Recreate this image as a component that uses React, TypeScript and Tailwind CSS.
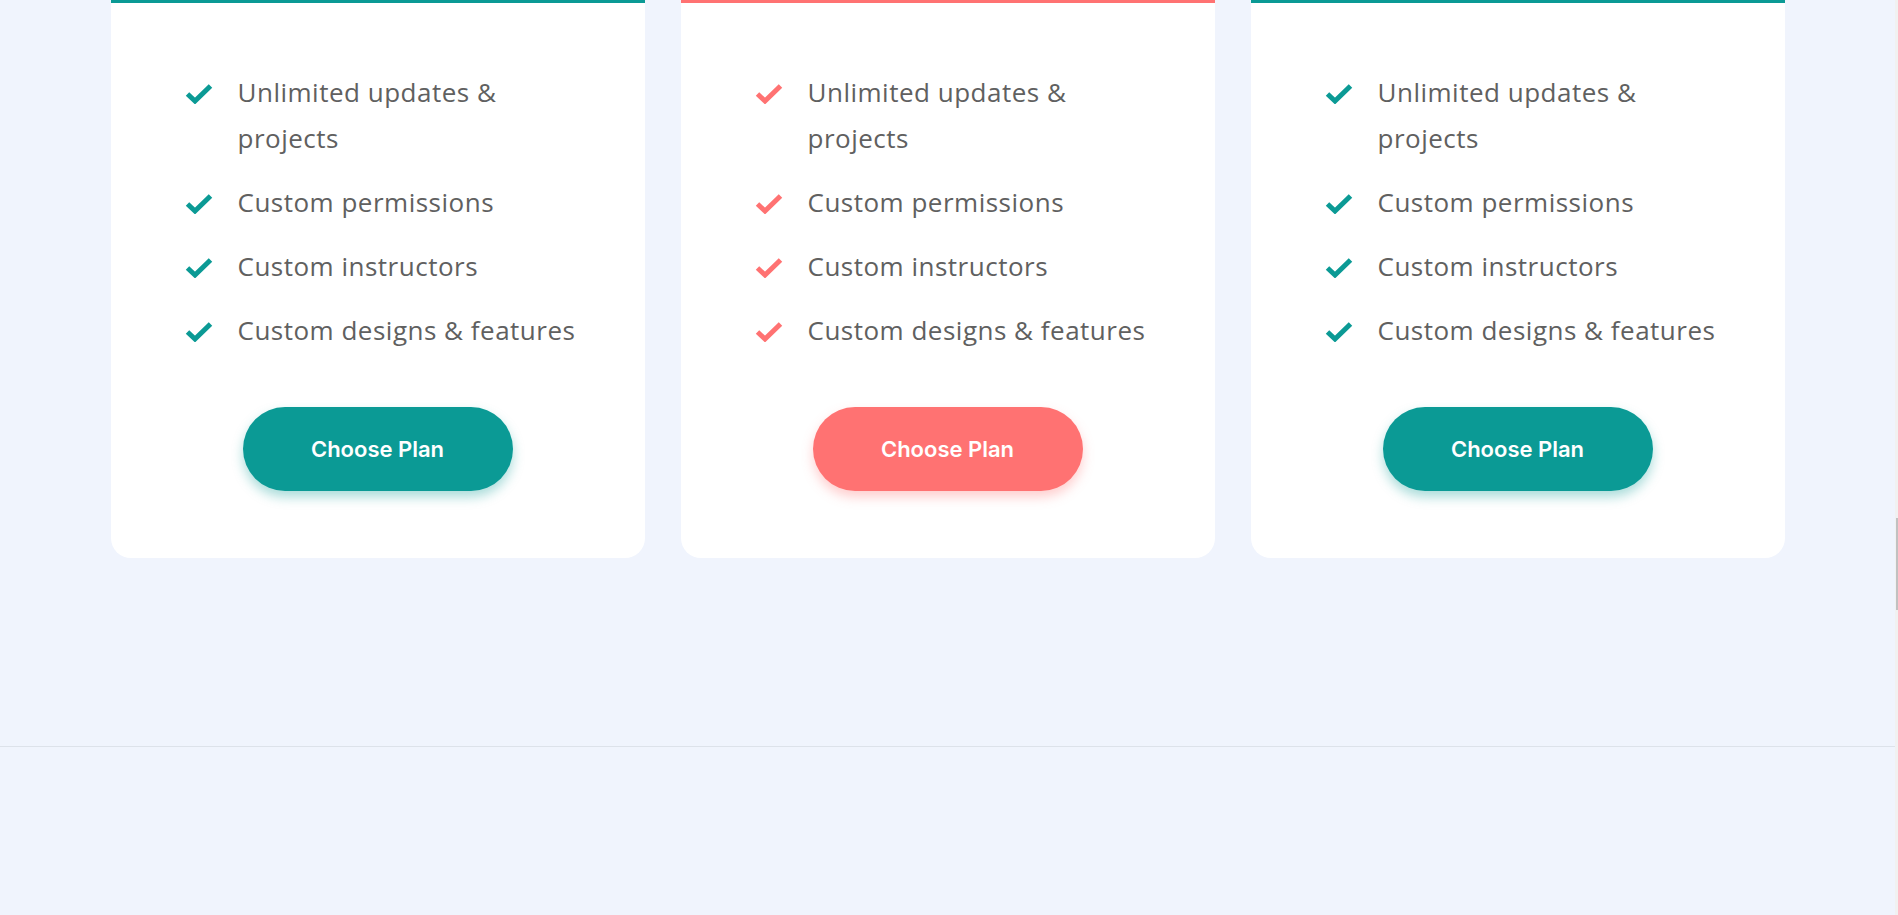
const plans = [
  { accent: "teal" },
  { accent: "coral" },
  { accent: "teal" },
] as const;

const features = [
  "Unlimited updates & projects",
  "Custom permissions",
  "Custom instructors",
  "Custom designs & features",
];

const CheckIcon = ({ color }: { color: string }) => (
  <svg width="28" height="21" viewBox="0 0 28 21" fill="none" className="shrink-0">
    <polyline points="2.5,11 10,18 25.5,3" stroke={color} strokeWidth="5" strokeLinejoin="miter" fill="none" />
  </svg>
);

const PlanCard = ({ accent }: { accent: "teal" | "coral" }) => {
  const color = accent === "teal" ? "#0b9a95" : "#ff7272";
  return (
    <div
      className={`bg-white rounded-b-[20px] border-t-[3px] pt-[66px] pb-[67px] flex flex-col ${
        accent === "teal" ? "border-[#0b9a95]" : "border-[#ff7272]"
      }`}
    >
      <ul className="flex flex-col gap-[18px] pl-[74px] pr-[20px]">
        {features.map((f) => (
          <li key={f} className="flex items-start gap-[25px]">
            <div className="h-[46px] flex items-center pt-[3px]">
              <CheckIcon color={color} />
            </div>
            <span className="w-[345px] text-[26px] tracking-[0.5px] leading-[46px] text-[#606060] font-['Open_Sans',sans-serif]">
              {f}
            </span>
          </li>
        ))}
      </ul>
      <button
        className={`mx-auto mt-[54px] w-[270px] h-[84px] rounded-full text-white text-[22px] font-semibold font-['Inter',sans-serif] ${
          accent === "teal"
            ? "bg-[#0b9a95] shadow-[0_6px_12px_rgba(11,154,149,0.35)]"
            : "bg-[#ff7272] shadow-[0_6px_12px_rgba(255,114,114,0.35)]"
        }`}
      >
        Choose Plan
      </button>
    </div>
  );
};

export default function App() {
  return (
    <div className="flex w-full h-[915px] bg-[#f0f4fd] overflow-hidden">
      <main className="flex-1 flex flex-col">
        <section className="pb-[188px] border-b border-[#dde2ea]">
          <div className="w-[1674px] mx-auto grid grid-cols-3 gap-[36px]">
            {plans.map((p, i) => (
              <PlanCard key={i} accent={p.accent} />
            ))}
          </div>
        </section>
        <footer className="flex-1" />
      </main>
      <aside className="w-[3px] bg-[#f1f1f1] flex justify-end">
        <div className="w-[2px] h-[92px] mt-[518px] bg-[#c1c1c1]" />
      </aside>
    </div>
  );
}
